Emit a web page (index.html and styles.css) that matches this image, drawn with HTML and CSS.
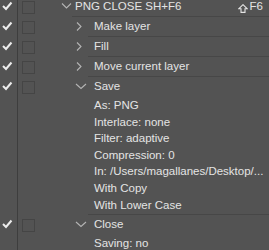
FILE: index.html
```html
<!DOCTYPE html>
<html>
<head>
<meta charset="utf-8">
<link rel="stylesheet" href="styles.css">
</head>
<body>
<div class="panel">
  <div class="group action">
    <div class="chk"><svg width="17" height="19" viewBox="0 0 17 19"><polyline points="3,9 6,12 11.5,5.5" class="tick"/></svg></div>
    <div class="tog"><span class="box"></span></div>
    <div class="exp"><svg width="37" height="19" viewBox="0 0 37 19"><polyline points="27,6.5 31.5,11 36,6.5" class="chev"/></svg></div>
    <div class="main">
      <div class="head"><span class="label">PNG CLOSE SH+F6</span><span class="key"><svg width="10" height="9" viewBox="0 0 10 9" class="shift"><polygon points="5,0.7 9.3,4.8 7,4.8 7,8.4 3,8.4 3,4.8 0.7,4.8"/></svg>F6</span></div>
    </div>
  </div>

  <div class="group step">
    <div class="chk"><svg width="17" height="19" viewBox="0 0 17 19"><polyline points="3,9 6,12 11.5,5.5" class="tick"/></svg></div>
    <div class="tog"><span class="box"></span></div>
    <div class="exp"><svg width="53" height="19" viewBox="0 0 53 19"><polyline points="42,5.5 46,9.5 42,13.5" class="chev"/></svg></div>
    <div class="main"><div class="head">Make layer</div></div>
  </div>

  <div class="group step">
    <div class="chk"><svg width="17" height="19" viewBox="0 0 17 19"><polyline points="3,9 6,12 11.5,5.5" class="tick"/></svg></div>
    <div class="tog"><span class="box"></span></div>
    <div class="exp"><svg width="53" height="19" viewBox="0 0 53 19"><polyline points="42,5.5 46,9.5 42,13.5" class="chev"/></svg></div>
    <div class="main"><div class="head">Fill</div></div>
  </div>

  <div class="group step">
    <div class="chk"><svg width="17" height="19" viewBox="0 0 17 19"><polyline points="3,9 6,12 11.5,5.5" class="tick"/></svg></div>
    <div class="tog"><span class="box"></span></div>
    <div class="exp"><svg width="53" height="19" viewBox="0 0 53 19"><polyline points="42,5.5 46,9.5 42,13.5" class="chev"/></svg></div>
    <div class="main"><div class="head">Move current layer</div></div>
  </div>

  <div class="group step">
    <div class="chk"><svg width="17" height="19" viewBox="0 0 17 19"><polyline points="3,9 6,12 11.5,5.5" class="tick"/></svg></div>
    <div class="tog"><span class="box"></span></div>
    <div class="exp"><svg width="53" height="19" viewBox="0 0 53 19"><polyline points="41,7 46,11.5 51,7" class="chev"/></svg></div>
    <div class="main">
      <div class="head">Save</div>
      <div class="subs">
        <div class="sub">As: PNG</div>
        <div class="sub">Interlace: none</div>
        <div class="sub">Filter: adaptive</div>
        <div class="sub">Compression: 0</div>
        <div class="sub">In: /Users/magallanes/Desktop/...</div>
        <div class="sub">With Copy</div>
        <div class="sub">With Lower Case</div>
      </div>
    </div>
  </div>

  <div class="group step">
    <div class="chk"><svg width="17" height="19" viewBox="0 0 17 19"><polyline points="3,9 6,12 11.5,5.5" class="tick"/></svg></div>
    <div class="tog"><span class="box"></span></div>
    <div class="exp"><svg width="53" height="19" viewBox="0 0 53 19"><polyline points="41,7 46,11.5 51,7" class="chev"/></svg></div>
    <div class="main">
      <div class="head">Close</div>
      <div class="subs">
        <div class="sub">Saving: no</div>
      </div>
    </div>
  </div>
</div>
</body>
</html>
```

FILE: styles.css
```css
html, body {
  margin: 0;
  padding: 0;
  background: #535353;
  overflow: hidden;
}

.panel {
  margin-top: -3px;
  font-family: "Liberation Sans", Arial, Helvetica, sans-serif;
  font-size: 11.5px;
  color: #e4e4e4;
}

.group {
  display: flex;
  align-items: stretch;
}

.chk {
  width: 17px;
  flex: none;
  border-right: 1px solid #3e3e3e;
}

.chk svg,
.exp svg {
  display: block;
}

.tick {
  fill: none;
  stroke: #ececec;
  stroke-width: 2;
  stroke-linecap: butt;
  stroke-linejoin: miter;
}

.tog {
  width: 17px;
  flex: none;
  padding-left: 4px;
  box-sizing: border-box;
}

.box {
  display: block;
  width: 13px;
  height: 13px;
  margin-top: 4px;
  box-sizing: border-box;
  border: 1px solid #454545;
}

.exp {
  flex: none;
}

.action .exp { width: 37px; }
.step .exp { width: 53px; }

.chev {
  fill: none;
  stroke: #b4b4b4;
  stroke-width: 1.1;
}

.main {
  flex: 1;
  min-width: 0;
  border-bottom: 1px solid #474747;
}

.action .main { padding-left: 3px; }
.step .main { padding-left: 6px; }

.head {
  height: 19px;
  line-height: 19px;
  display: flex;
  white-space: nowrap;
}

.label {
  flex: 1;
}

.key {
  display: flex;
  align-items: center;
  padding-right: 6px;
}

.shift {
  margin-right: 2px;
  margin-top: 3px;
  fill: none;
  stroke: #e4e4e4;
  stroke-width: 1.1;
}

.subs {
  padding: 1px 0;
}

.sub {
  height: 16.6px;
  line-height: 16.6px;
  white-space: nowrap;
}
```
